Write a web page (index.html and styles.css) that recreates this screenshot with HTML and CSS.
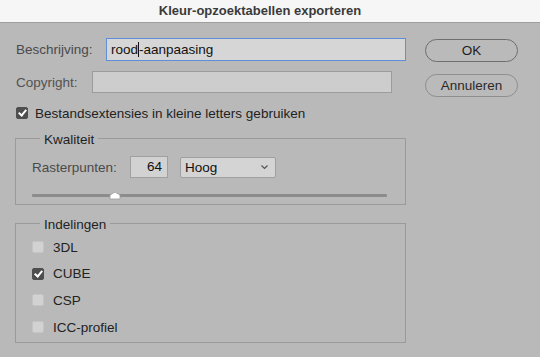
FILE: index.html
```html
<!DOCTYPE html>
<html lang="nl">
<head>
  <meta charset="UTF-8" />
  <title>Kleur-opzoektabellen exporteren</title>
  <link rel="stylesheet" href="styles.css">
</head>
<body>

  <!-- titelbalk -->
  <div class="titlebar">Kleur-opzoektabellen exporteren</div>

  <div class="dialog">
    <div class="main">

      <div class="row">
        <span class="label label-desc">Beschrijving:</span>
        <div class="field field-focus">rood<span class="caret"></span>-aanpaasing</div>
      </div>

      <div class="row row-copy">
        <span class="label label-copy">Copyright:</span>
        <div class="field field-copy"></div>
      </div>

      <div class="check-row check-lower">
        <span class="box checked"></span>
        <span>Bestandsextensies in kleine letters gebruiken</span>
      </div>

      <!-- kwaliteit -->
      <fieldset class="group group-quality">
        <legend>Kwaliteit</legend>
        <div class="raster">
          <span class="label">Rasterpunten:</span>
          <div class="num">64</div>
          <div class="select">Hoog
            <svg width="9" height="6" viewBox="0 0 9 6"><path d="M1.5 1.5 L4.5 4.5 L7.5 1.5" fill="none" stroke="#555" stroke-width="1.2"/></svg>
          </div>
        </div>
        <div class="slider">
          <div class="track"></div>
          <svg class="thumb" style="left: 77px" width="12" height="9" viewBox="0 0 12 9"><path d="M1 4 L6 1 L11 4 L11 8 L1 8 Z" fill="#fff" stroke="#9a9a9a" stroke-width="0.8"/></svg>
        </div>
      </fieldset>

      <!-- indelingen -->
      <fieldset class="group group-formats">
        <legend>Indelingen</legend>
        <div class="check-row"><span class="box"></span><span>3DL</span></div>
        <div class="check-row"><span class="box checked"></span><span>CUBE</span></div>
        <div class="check-row"><span class="box"></span><span>CSP</span></div>
        <div class="check-row"><span class="box"></span><span>ICC-profiel</span></div>
      </fieldset>

    </div>

    <div class="buttons">
      <button class="btn btn-ok">OK</button>
      <button class="btn btn-cancel">Annuleren</button>
    </div>
  </div>

</body>
</html>
```

FILE: styles.css
```css
body {
  margin: 0;
  width: 540px;
  height: 357px;
  overflow: hidden;
  background: #b9b9b9;
  font-family: "Liberation Sans", Arial, sans-serif;
  font-size: 13.5px;
  color: #222;
}

.titlebar {
  height: 22px;
  line-height: 22px;
  background: #f6f6f6;
  border-bottom: 1px solid #9e9e9e;
  text-align: center;
  padding-right: 20px;
  font-weight: bold;
  font-size: 13px;
  color: #3a3a3a;
}

.dialog {
  display: flex;
  padding: 15px 0 0 15px;
}

.main {
  width: 391px;
}

.row {
  display: flex;
  align-items: center;
  height: 23px;
}

.row-copy {
  margin-top: 10px;
  height: 22px;
}

.label {
  color: #4a4a4a;
  padding-left: 1px;
}

.label-desc {
  width: 90px;
}

.label-copy {
  width: 76px;
  color: #525252;
}

.field {
  box-sizing: border-box;
  width: 300px;
  height: 100%;
  background: #d4d4d4;
  border: 1px solid #9c9c9c;
  padding-left: 4px;
  line-height: 21px;
  color: #111;
}

.field-focus {
  border-color: #5e8fd8;
  background: #d6d6d6;
}

.field-copy {
  background: #cdcdcd;
}

.caret {
  display: inline-block;
  width: 1px;
  height: 15px;
  background: #111;
  vertical-align: -3px;
}

.check-row {
  display: flex;
  align-items: center;
  gap: 7px;
  height: 12px;
  color: #222;
}

.check-lower {
  margin-top: 14px;
  padding-left: 1px;
}

.box {
  box-sizing: border-box;
  width: 12px;
  height: 12px;
  border-radius: 2px;
  background: #d2d2d2;
  border: 1px solid #c4c4c4;
  position: relative;
}

.box.checked {
  background: #4e4e4e;
  border-color: #4e4e4e;
}

/* vinkje */
.box.checked::after {
  content: "";
  position: absolute;
  left: 3px;
  top: 0px;
  width: 3px;
  height: 6px;
  border: solid #fff;
  border-width: 0 2px 2px 0;
  transform: rotate(40deg);
}

.group {
  margin: 0;
  border: 1px solid #9a9a9a;
  padding: 0 16px;
  box-sizing: border-box;
}

.group legend {
  padding: 4px 4px 0;
  margin-left: 8px;
  line-height: 16px;
  color: #1f1f1f;
}

.group-quality {
  margin-top: 9px;
  height: 77px;
}

.raster {
  display: flex;
  align-items: center;
  margin-top: 8px;
}

.raster .label {
  width: 98px;
  padding-left: 0;
}

.num {
  box-sizing: border-box;
  width: 38px;
  height: 22px;
  background: #d2d2d2;
  border: 1px solid #a0a0a0;
  text-align: right;
  padding-right: 5px;
  line-height: 20px;
  color: #111;
}

.select {
  box-sizing: border-box;
  width: 96px;
  height: 21px;
  margin-left: 12px;
  background: #d4d4d4;
  border: 1px solid #a0a0a0;
  border-radius: 2px;
  padding: 0 6px 0 4px;
  line-height: 19px;
  color: #111;
  display: flex;
  justify-content: space-between;
  align-items: center;
}

.slider {
  position: relative;
  margin-top: 16px;
  height: 6px;
}

.track {
  height: 3px;
  background: #8c8c8c;
  border-radius: 1px;
  margin-right: 2px;
}

.thumb {
  position: absolute;
  top: -3px;
}

.group-formats {
  margin-top: 8px;
  height: 130px;
  padding-top: 8px;
}

.group-formats .check-row {
  margin-bottom: 14.7px;
  gap: 9px;
}

.buttons {
  display: flex;
  flex-direction: column;
  margin-left: 19px;
  padding-top: 1px;
}

.btn {
  width: 93px;
  height: 23px;
  border-radius: 12px;
  background: #bababa;
  border: 1px solid #6e6e6e;
  font-family: inherit;
  font-size: 13.5px;
  color: #1e1e1e;
  padding: 0;
}

.btn-cancel {
  margin-top: 12px;
  border-color: #8e8e8e;
  color: #2a2a2a;
}
```
